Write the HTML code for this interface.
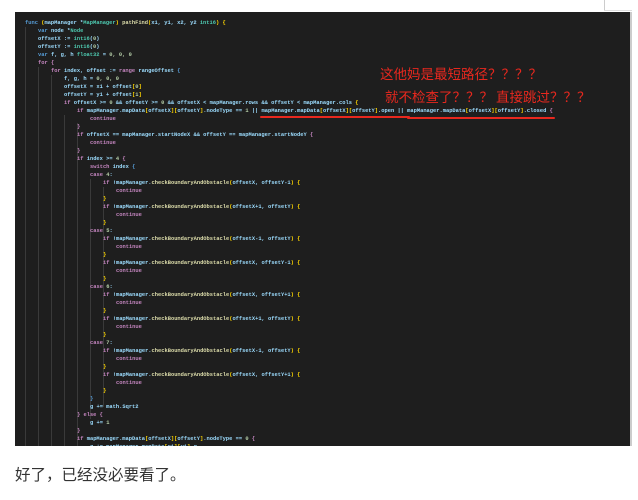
<!DOCTYPE html>
<html><head><meta charset="utf-8"><style>
body{margin:0;width:638px;height:500px;background:#fff;position:relative;overflow:hidden;font-family:"Liberation Sans","Noto Sans CJK SC",sans-serif}
#img{position:absolute;left:15px;top:12px;width:615px;height:434px;background:#1e1e1e;overflow:hidden;border-right:2px solid #ccc}
.l{position:absolute;left:0;height:8px;line-height:8px;white-space:pre;font-family:"Liberation Mono",monospace;font-size:5.4px;font-weight:bold;color:#9cdcfe}
.k{color:#c586c0}.b{color:#569cd6}.y{color:#ffd700}.f{color:#dcdcaa}.n{color:#b5cea8}.w{color:#d4d4d4}.t{color:#4ec9b0}
.g{position:absolute;width:1px;background:#3a3a3a}
.r{position:absolute;color:#e8281e;font-size:13.5px;font-family:"Noto Sans CJK SC",sans-serif;white-space:nowrap}
</style></head><body>
<div style="position:absolute;left:604px;top:0;width:1px;height:10px;background:#ccc"></div>
<div style="position:absolute;left:604px;top:10px;width:28px;height:1px;background:#ddd"></div>
<div id="img">
<div class="g" style="left:10px;top:15px;height:419px"></div>
<div class="g" style="left:23px;top:55px;height:379px"></div>
<div class="g" style="left:36px;top:63px;height:371px"></div>
<div class="g" style="left:49px;top:103px;height:331px"></div>
<div class="g" style="left:62px;top:111px;height:323px"></div>
<div class="g" style="left:75px;top:167px;height:240px"></div>
<div class="g" style="left:88px;top:175px;height:220px"></div>
<div id="code"></div>
<div class="r" style="left:365px;top:51px">这他妈是最短路径？？？？</div>
<div class="r" style="left:370px;top:74px">就不检查了？？？ 直接跳过？？？</div>
<div style="position:absolute;left:245px;top:104px;width:150px;height:2px;background:#e8281e;border-radius:1px"></div>
<div style="position:absolute;left:392px;top:105px;width:148px;height:2px;background:#e8281e;border-radius:1px"></div>
</div>
<div style="position:absolute;left:15px;top:463px;font-size:15.5px;color:#333">好了，已经没必要看了。</div>
<script>
var I=[0,1,1,1,1,1,2,3,3,3,3,4,5,4,4,5,4,4,5,5,6,7,6,6,7,6,5,6,7,6,6,7,6,5,6,7,6,6,7,6,5,6,7,6,6,7,6,5,5,4,5,4,4,5];
var c='<span class="k">if</span> !mapManager.<span class="f">checkBoundaryAndObstacle</span><span class="y">(</span>';
var L=['<span class="b">func</span> <span class="y">(</span>mapManager *<span class="t">MapManager</span><span class="y">)</span> <span class="f">pathFind</span><span class="y">(</span>x1, y1, x2, y2 <span class="t">int16</span><span class="y">)</span> <span class="y">{</span>',
'<span class="b">var</span> node *<span class="t">Node</span>','offsetX := <span class="t">int16</span>(<span class="n">0</span>)','offsetY := <span class="t">int16</span>(<span class="n">0</span>)',
'<span class="b">var</span> f, g, h <span class="t">float32</span> = <span class="n">0, 0, 0</span>','<span class="k">for</span> <span class="k">{</span>',
'<span class="k">for</span> index, offset := <span class="k">range</span> rangeOffset <span class="b">{</span>','f, g, h = <span class="n">0, 0, 0</span>',
'offsetX = x1 + offset<span class="y">[</span><span class="n">0</span><span class="y">]</span>','offsetY = y1 + offset<span class="y">[</span><span class="n">1</span><span class="y">]</span>',
'<span class="k">if</span> offsetX &gt;= <span class="n">0</span> &amp;&amp; offsetY &gt;= <span class="n">0</span> &amp;&amp; offsetX &lt; mapManager.rows &amp;&amp; offsetY &lt; mapManager.cols <span class="y">{</span>',
'<span class="k">if</span> mapManager.mapData<span class="y">[</span>offsetX<span class="y">][</span>offsetY<span class="y">]</span>.nodeType == <span class="n">1</span> || mapManager.mapData<span class="y">[</span>offsetX<span class="y">][</span>offsetY<span class="y">]</span>.open || mapManager.mapData<span class="y">[</span>offsetX<span class="y">][</span>offsetY<span class="y">]</span>.closed <span class="k">{</span>',
'<span class="k">continue</span>','<span class="k">}</span>',
'<span class="k">if</span> offsetX == mapManager.startNodeX &amp;&amp; offsetY == mapManager.startNodeY <span class="k">{</span>','<span class="k">continue</span>','<span class="k">}</span>',
'<span class="k">if</span> index &gt;= <span class="n">4</span> <span class="k">{</span>','<span class="k">switch</span> index <span class="b">{</span>','<span class="k">case</span> <span class="n">4</span>:'];
function blk(a){L.push(c+a+'<span class="y">)</span> <span class="y">{</span>','<span class="k">continue</span>','<span class="y">}</span>');}
blk('offsetX, offsetY-1');blk('offsetX+1, offsetY');L.push('<span class="k">case</span> <span class="n">5</span>:');
blk('offsetX-1, offsetY');blk('offsetX, offsetY-1');L.push('<span class="k">case</span> <span class="n">6</span>:');
blk('offsetX, offsetY+1');blk('offsetX+1, offsetY');L.push('<span class="k">case</span> <span class="n">7</span>:');
blk('offsetX-1, offsetY');blk('offsetX, offsetY+1');
L.push('<span class="b">}</span>','g += math.Sqrt2','<span class="k">} else {</span>','g += <span class="n">1</span>','<span class="k">}</span>',
'<span class="k">if</span> mapManager.mapData<span class="y">[</span>offsetX<span class="y">][</span>offsetY<span class="y">]</span>.nodeType == <span class="n">0</span> <span class="k">{</span>',
'g += mapManager.mapData<span class="y">[</span>x1<span class="y">][</span>y1<span class="y">]</span>.g');
var h='';for(var i=0;i<L.length;i++){h+='<div class="l" style="top:'+(7+i*8)+'px;left:'+(10+I[i]*13)+'px">'+L[i]+'</div>';}
document.getElementById('code').innerHTML=h;
</script>
</body></html>
